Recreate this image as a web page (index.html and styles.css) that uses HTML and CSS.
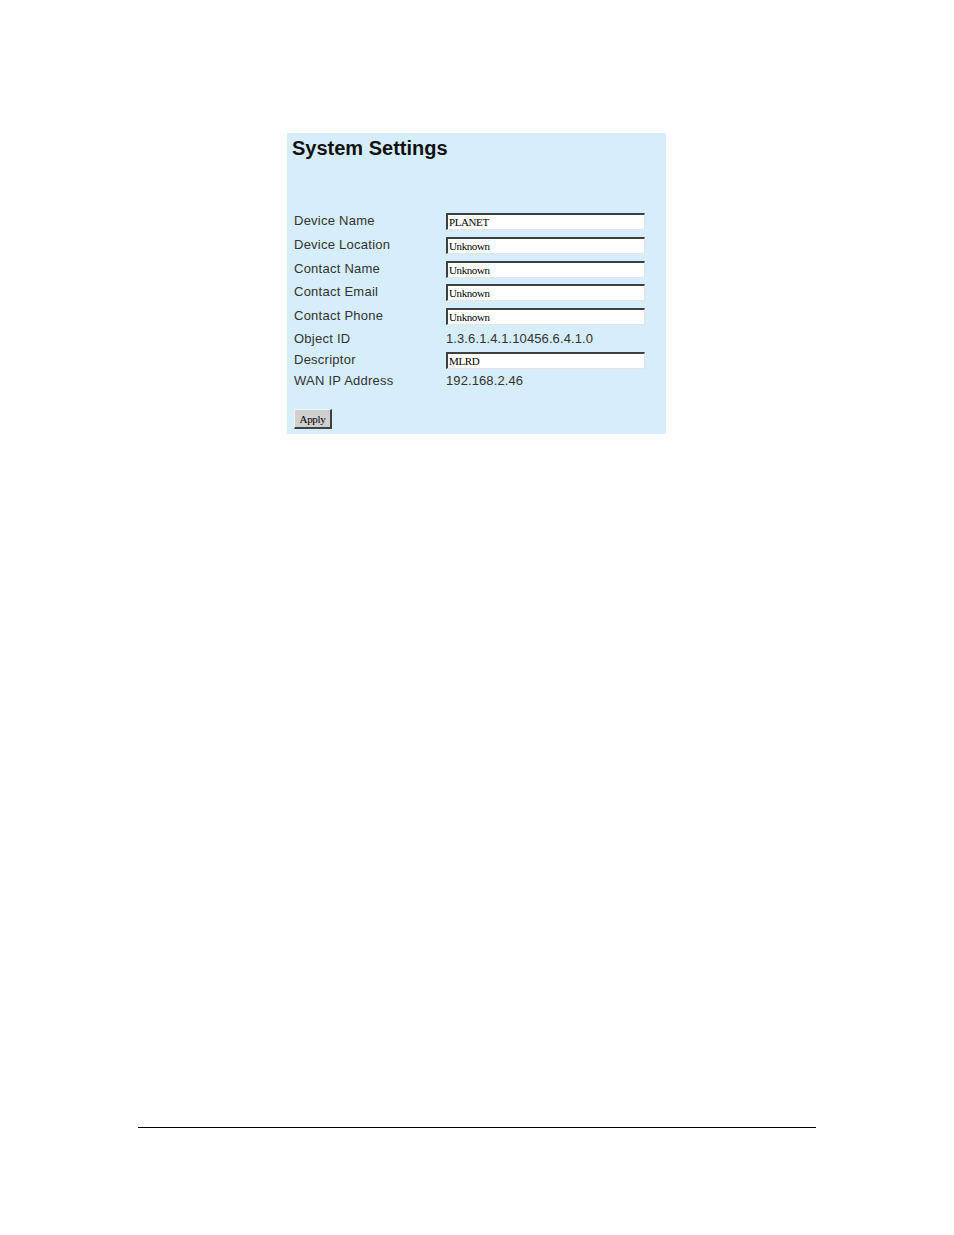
FILE: index.html
```html
<!DOCTYPE html>
<html>
<head>
<meta charset="utf-8">
<link rel="stylesheet" href="styles.css">
</head>
<body>
<div class="page">
  <div class="panel">
    <h1 class="title">System Settings</h1>
    <div class="form">
      <div class="label">Device Name</div>
      <div class="value"><input class="field" type="text" value="PLANET"></div>
      <div class="label">Device Location</div>
      <div class="value"><input class="field" type="text" value="Unknown"></div>
      <div class="label">Contact Name</div>
      <div class="value"><input class="field" type="text" value="Unknown"></div>
      <div class="label">Contact Email</div>
      <div class="value"><input class="field" type="text" value="Unknown"></div>
      <div class="label">Contact Phone</div>
      <div class="value"><input class="field" type="text" value="Unknown"></div>
      <div class="label">Object ID</div>
      <div class="value text">1.3.6.1.4.1.10456.6.4.1.0</div>
      <div class="label">Descriptor</div>
      <div class="value"><input class="field" type="text" value="MLRD"></div>
      <div class="label">WAN IP Address</div>
      <div class="value text">192.168.2.46</div>
    </div>
    <div class="actions"><button class="btn" type="button">Apply</button></div>
  </div>
  <div class="rule"></div>
</div>
</body>
</html>
```
FILE: styles.css
```css
html, body {
  margin: 0;
  padding: 0;
  background: #ffffff;
}
.page {
  height: 1235px;
  padding-top: 133px;
  box-sizing: border-box;
  overflow: hidden;
}
.panel {
  margin-left: 287px;
  width: 379px;
  height: 301px;
  box-sizing: border-box;
  background: #d6edfb;
  padding: 5px 0 5px 0;
  display: flex;
  flex-direction: column;
}
.title {
  margin: 0 0 0 5px;
  font-family: "Liberation Sans", Arial, sans-serif;
  font-weight: bold;
  font-size: 20px;
  line-height: 21px;
  color: #111;
  letter-spacing: 0;
}
.form {
  margin-top: 50px;
  margin-left: 7px;
  display: grid;
  grid-template-columns: 152px 199px;
  grid-template-rows: 23.5px 23.5px 24px 23.5px 23.5px 22px 20px 22px;
  font-family: "Liberation Sans", Arial, sans-serif;
  font-size: 13px;
  color: #333333;
  letter-spacing: 0.25px;
}
.label, .value {
  display: flex;
  align-items: center;
}
.value .field {
  margin-top: 2px;
}
.field {
  width: 199px;
  height: 17px;
  box-sizing: border-box;
  margin: 0;
  padding: 0 1px;
  border-style: solid;
  border-width: 2px 1px 1px 2px;
  border-color: #404040 #e4e4e4 #e4e4e4 #404040;
  background: #ffffff;
  font-family: "Liberation Serif", "Times New Roman", serif;
  font-size: 11px;
  letter-spacing: -0.4px;
  color: #000;
  outline: none;
}
.text {
  letter-spacing: 0.1px;
}
.actions {
  margin-top: auto;
  margin-left: 7px;
}
.btn {
  width: 38px;
  height: 20px;
  margin: 0;
  padding: 0;
  box-sizing: border-box;
  background: #cfcfcf;
  border-style: solid;
  border-width: 1px 2px 2px 1px;
  border-color: #f2f2f2 #404040 #404040 #f2f2f2;
  font-family: "Liberation Serif", "Times New Roman", serif;
  font-size: 11px;
  letter-spacing: -0.3px;
  color: #000;
}
.rule {
  margin-top: 693px;
  margin-left: 138px;
  width: 678px;
  height: 1px;
  background: #000;
}
```
